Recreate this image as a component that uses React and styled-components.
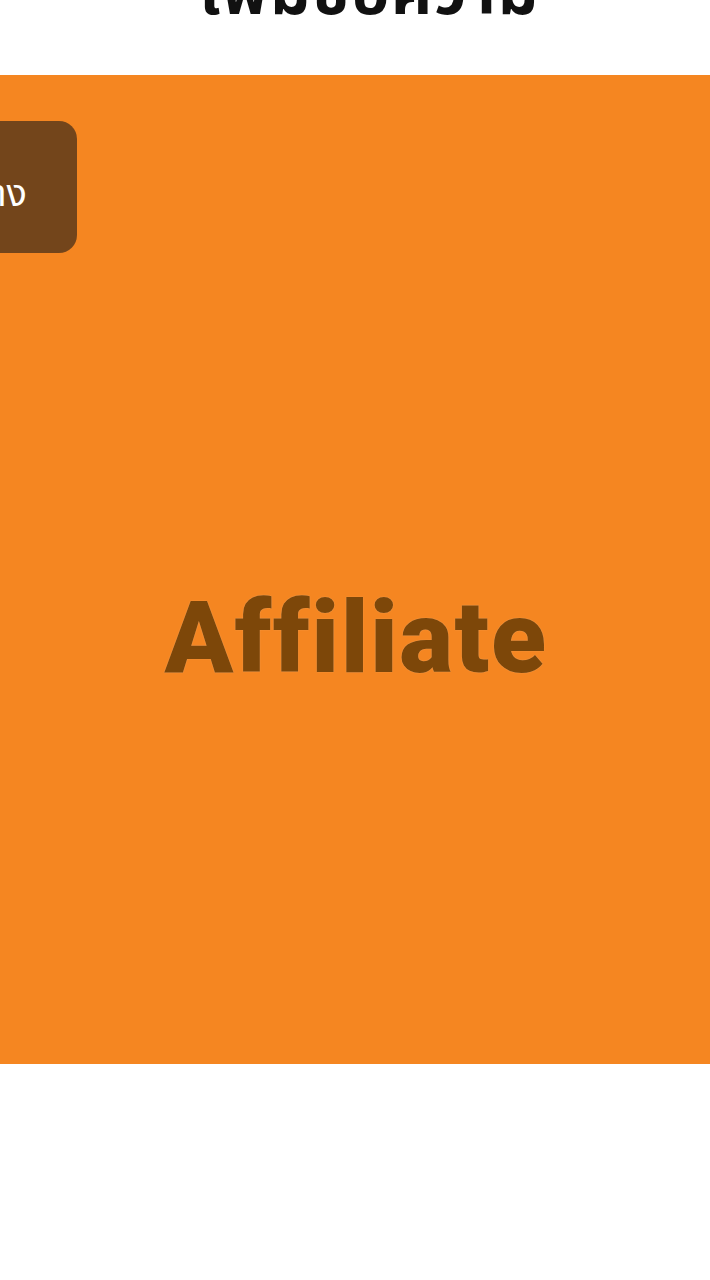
import styled, { createGlobalStyle } from "styled-components";

const GlobalStyle = createGlobalStyle`
  html, body {
    margin: 0;
    padding: 0;
    background: #ffffff;
  }
  body {
    font-family: "Noto Sans Thai", "Noto Sans", "DejaVu Sans", sans-serif;
  }
`;

const Page = styled.div`
  width: 710px;
  overflow: hidden;
`;

const TitleBar = styled.div`
  height: 75px;
  overflow: hidden;
  display: flex;
  justify-content: center;
`;

const Title = styled.h1`
  margin: -43px 0 0 30px;
  font-size: 63px;
  font-weight: 700;
  color: #111111;
  line-height: 1.2;
  letter-spacing: 2px;
  white-space: nowrap;
`;

const Poster = styled.section`
  position: relative;
  height: 989px;
  background: #f58621;
  display: flex;
  justify-content: center;
  align-items: flex-start;
  padding-top: 512px;
  box-sizing: border-box;
`;

const Tag = styled.div`
  position: absolute;
  left: -120px;
  top: 46px;
  width: 197px;
  height: 132px;
  background: #73451b;
  border-radius: 18px;
  display: flex;
  align-items: center;
  justify-content: flex-end;
  padding: 14px 50px 0 0;
  box-sizing: border-box;
  color: #ffffff;
  font-size: 38px;
  white-space: nowrap;
`;

const Brand = styled.h2`
  margin: 0 0 0 2px;
  font-family: Roboto, "Liberation Sans", sans-serif;
  font-weight: 900;
  font-size: 101px;
  line-height: 1;
  color: #7d4709;
  text-shadow: 0 0 1px #f3b27a;
  letter-spacing: 1.6px;
`;

export default function App() {
  return (
    <Page>
      <GlobalStyle />
      <TitleBar>
        <Title>เพิ่มข้อความ</Title>
      </TitleBar>
      <Poster>
        <Tag>ตัวอย่าง</Tag>
        <Brand>Affiliate</Brand>
      </Poster>
    </Page>
  );
}
